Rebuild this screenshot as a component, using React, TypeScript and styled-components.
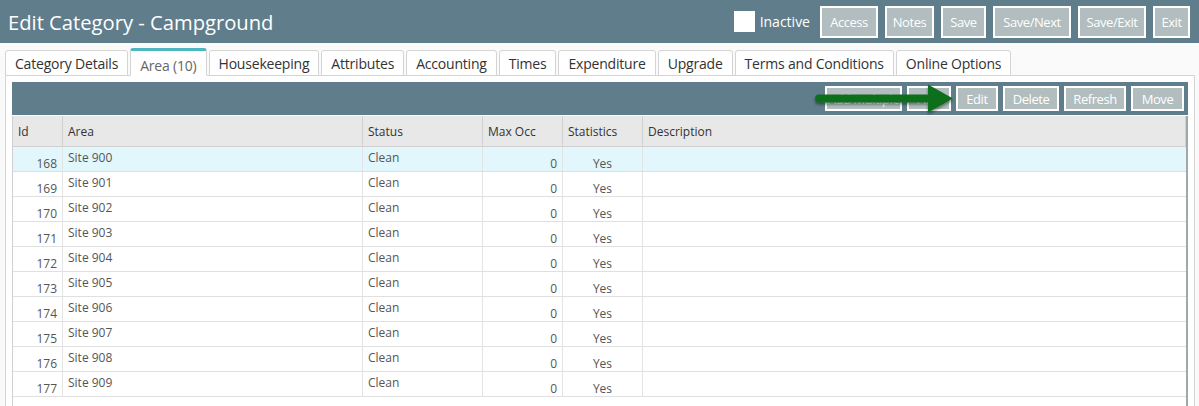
import React from "react";
import styled, { createGlobalStyle } from "styled-components";

const Global = createGlobalStyle`
  html, body { margin: 0; padding: 0; background: #fafafa; }
  body { font-family: "Open Sans", "Noto Sans", Arial, sans-serif; overflow: hidden; }
  * { box-sizing: border-box; }
`;

const Page = styled.div`
  width: 1199px;
  height: 406px;
  position: relative;
  background: #fafafa;
`;

const Header = styled.div`
  height: 43px;
  background: #607d8b;
  display: flex;
  align-items: center;
  padding: 0 9px 0 8px;
`;

const Title = styled.h1`
  margin: 0;
  flex: 1;
  font-size: 20.2px;
  font-weight: 400;
  color: #fff;
`;

const CheckLabel = styled.label`
  display: flex;
  align-items: center;
  gap: 5px;
  color: #fff;
  font-size: 14px;
  margin-right: 10px;
`;

const CheckBox = styled.span`
  width: 21px;
  height: 21px;
  background: #fff;
  display: inline-block;
`;

const BtnGroup = styled.div`
  display: flex;
  gap: 7px;
`;

const Btn = styled.button<{ $h?: number; $w?: number }>`
  height: ${(p) => p.$h ?? 32}px;
  width: ${(p) => (p.$w ? `${p.$w}px` : "auto")};
  padding: 0;
  background: #b1bdbe;
  border: 2px solid #fff;
  color: #fff;
  font-family: "Open Sans", Arial, sans-serif;
  font-size: 13px;
  letter-spacing: -0.45px;
  white-space: nowrap;
  overflow: hidden;
`;

const Tabs = styled.div`
  display: flex;
  gap: 2px;
  padding: 5px 0 0 5px;
`;

const Tab = styled.div<{ $active?: boolean }>`
  height: ${(p) => (p.$active ? 28 : 26)}px;
  margin-top: ${(p) => (p.$active ? 0 : 2)}px;
  padding: 0 9px;
  display: flex;
  align-items: center;
  padding-top: ${(p) => (p.$active ? 5 : 0)}px;
  font-size: 14px;
  letter-spacing: -0.2px;
  color: ${(p) => (p.$active ? "#666" : "#333")};
  background: #fff;
  border: 1px solid #d4d4d4;
  border-top: ${(p) => (p.$active ? "3px solid #4db6c1" : "1px solid #d4d4d4")};
  border-bottom: ${(p) => (p.$active ? "1px solid #fff" : "1px solid #d4d4d4")};
  border-radius: 3px 3px 0 0;
  position: relative;
  z-index: ${(p) => (p.$active ? 2 : 1)};
  margin-bottom: -1px;
`;

const Panel = styled.div`
  margin: 0 4px 0 5px;
  background: #fff;
  border: 1px solid #d4d4d4;
  padding: 6px 6px 0 6px;
  height: 340px;
`;

const Toolbar = styled.div`
  height: 33px;
  background: #607d8b;
  display: flex;
  justify-content: flex-end;
  align-items: center;
  gap: 5px;
  padding-right: 4px;
`;

const Grid = styled.div`
  margin-top: 1px;
  border-left: 1px solid #d0d0d0;
  border-right: 2px solid #a0a8aa;
  height: 300px;
  display: grid;
  grid-template-columns: 50px 300px 120px 80px 80px 1fr;
  grid-template-rows: 31px;
  grid-auto-rows: 25px;
  align-content: start;
`;

const HeadCell = styled.div`
  background: #e8e8e8;
  border-right: 1px solid #d0d0d0;
  border-bottom: 1px solid #d0d0d0;
  font-size: 12px;
  color: #333;
  padding: 0 5px;
  display: flex;
  align-items: center;
  &:last-of-type { border-right: none; }
`;

const Cell = styled.div<{ $align?: "left" | "right" | "center"; $low?: boolean; $sel?: boolean; $last?: boolean }>`
  background: ${(p) => (p.$sel ? "#e1f7fc" : "#fff")};
  border-right: ${(p) => (p.$last ? "none" : "1px solid #e4e4e4")};
  border-bottom: 1px solid ${(p) => (p.$sel ? "#cfe3e8" : "#e0e0e0")};
  font-size: 12px;
  color: #555;
  padding: ${(p) => (p.$low ? "8px" : "2px")} 5px 0 5px;
  text-align: ${(p) => p.$align ?? "left"};
  line-height: 17px;
  white-space: nowrap;
  overflow: hidden;
`;

const Arrow = styled.svg`
  position: absolute;
  left: 800px;
  top: 80px;
  overflow: visible;
  pointer-events: none;
`;

const rows = Array.from({ length: 10 }, (_, i) => ({
  id: 168 + i,
  area: `Site ${900 + i}`,
}));

export default function App() {
  return (
    <Page>
      <Global />
      <Header>
        <Title>Edit Category - Campground</Title>
        <CheckLabel>
          <CheckBox />
          Inactive
        </CheckLabel>
        <BtnGroup>
          <Btn $w={58}>Access</Btn>
          <Btn $w={49}>Notes</Btn>
          <Btn $w={45}>Save</Btn>
          <Btn $w={78}>Save/Next</Btn>
          <Btn $w={68}>Save/Exit</Btn>
          <Btn $w={37}>Exit</Btn>
        </BtnGroup>
      </Header>
      <Tabs>
        <Tab>Category Details</Tab>
        <Tab $active>Area (10)</Tab>
        <Tab>Housekeeping</Tab>
        <Tab>Attributes</Tab>
        <Tab>Accounting</Tab>
        <Tab>Times</Tab>
        <Tab>Expenditure</Tab>
        <Tab>Upgrade</Tab>
        <Tab>Terms and Conditions</Tab>
        <Tab>Online Options</Tab>
      </Tabs>
      <Panel>
        <Toolbar>
          <Btn $h={25} $w={77}>Add Multiple</Btn>
          <Btn $h={25} $w={44}>Add</Btn>
          <Btn $h={25} $w={42}>Edit</Btn>
          <Btn $h={25} $w={56}>Delete</Btn>
          <Btn $h={25} $w={62}>Refresh</Btn>
          <Btn $h={25} $w={53}>Move</Btn>
        </Toolbar>
        <Grid>
          <HeadCell>Id</HeadCell>
          <HeadCell>Area</HeadCell>
          <HeadCell>Status</HeadCell>
          <HeadCell>Max Occ</HeadCell>
          <HeadCell>Statistics</HeadCell>
          <HeadCell>Description</HeadCell>
          {rows.map((r, i) => (
            <React.Fragment key={r.id}>
              <Cell $align="right" $low $sel={i === 0}>{r.id}</Cell>
              <Cell $sel={i === 0}>{r.area}</Cell>
              <Cell $sel={i === 0}>Clean</Cell>
              <Cell $align="right" $low $sel={i === 0}>0</Cell>
              <Cell $align="center" $low $sel={i === 0}>Yes</Cell>
              <Cell $sel={i === 0} $last />
            </React.Fragment>
          ))}
        </Grid>
      </Panel>
      <Arrow width="160" height="40" viewBox="0 0 160 40">
        <defs>
          <filter id="sh" x="-10%" y="-30%" width="120%" height="180%">
            <feDropShadow dx="0" dy="2" stdDeviation="1.5" floodColor="#000" floodOpacity="0.45" />
          </filter>
        </defs>
        <g filter="url(#sh)">
          <path d="M19 14.5 L128 14.5 L128 4.5 L153 18.5 L128 32.5 L128 22.5 L19 22.5 Q15 22.5 15 18.5 Q15 14.5 19 14.5 Z" fill="#0f6e1e" />
        </g>
      </Arrow>
    </Page>
  );
}
